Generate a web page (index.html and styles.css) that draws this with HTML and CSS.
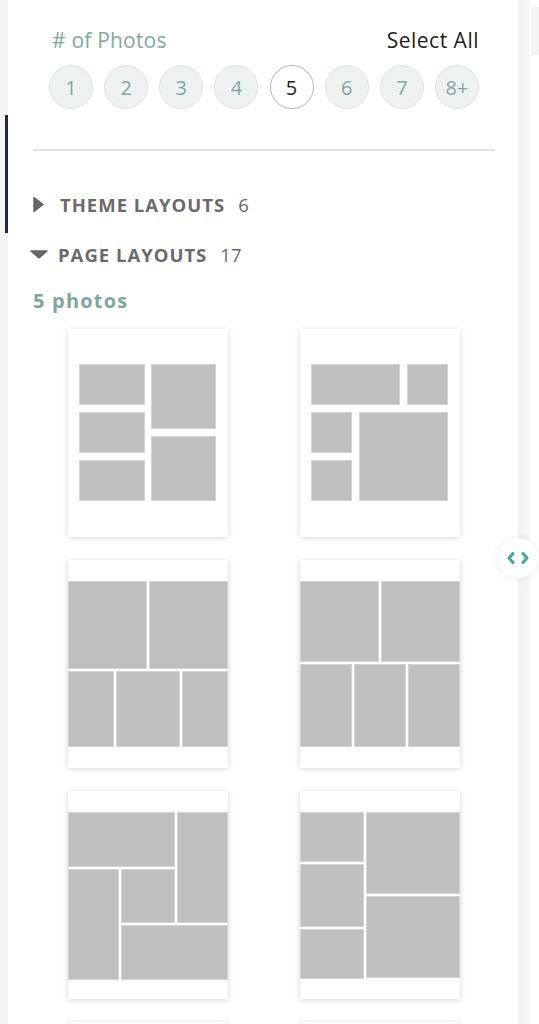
FILE: index.html
```html
<!DOCTYPE html>
<html lang="en">
<head>
  <meta charset="UTF-8">
  <title>Layouts</title>
  <meta name="viewport" content="width=device-width, initial-scale=1">
  <link rel="stylesheet" href="styles.css">
</head>

<body>

  <!-- Left rail -->
  <div class="rail">
    <div class="rail-mark"></div>
  </div>

  <!-- Layout panel -->
  <aside class="panel">

    <div class="filter">
      <div class="filter-head">
        <span class="filter-label"># of Photos</span>
        <a class="select-all" href="#">Select All</a>
      </div>
      <div class="counts">
        <button class="count">1</button>
        <button class="count">2</button>
        <button class="count">3</button>
        <button class="count">4</button>
        <button class="count active">5</button>
        <button class="count">6</button>
        <button class="count">7</button>
        <button class="count">8+</button>
      </div>
    </div>

    <hr class="divider">

    <div class="group">
      <svg class="caret-right" width="11" height="17" viewBox="0 0 11 17"><path d="M1 1.5 L10 8.5 L1 15.5 Z" fill="#666" stroke="#666" stroke-width="1.5" stroke-linejoin="round"/></svg>
      <span class="group-name">THEME LAYOUTS</span>
      <span class="group-count">6</span>
    </div>

    <div class="group">
      <svg class="caret-down" width="18" height="9" viewBox="0 0 18 9"><path d="M1 1 L17 1 L9 8 Z" fill="#666" stroke="#666" stroke-width="1.5" stroke-linejoin="round"/></svg>
      <span class="group-name">PAGE LAYOUTS</span>
      <span class="group-count">17</span>
    </div>

    <h4 class="sub">5 photos</h4>

    <div class="thumbs">

      <!-- 1 -->
      <div class="thumb">
        <div class="sheet sheet-a">
          <div class="col col-66">
            <div class="cell"></div><div class="cell"></div><div class="cell"></div>
          </div>
          <div class="col col-65">
            <div class="cell"></div><div class="cell"></div>
          </div>
        </div>
      </div>

      <!-- 2 -->
      <div class="thumb">
        <div class="sheet sheet-b">
          <div class="cell ga"></div><div class="cell gb"></div>
          <div class="cell gc"></div><div class="cell gd"></div>
          <div class="cell ge"></div>
        </div>
      </div>

      <!-- 3 -->
      <div class="thumb">
        <div class="sheet bleed">
          <div class="row row-88">
            <div class="cell"></div><div class="cell"></div>
          </div>
          <div class="row row-75">
            <div class="cell w46"></div><div class="cell"></div><div class="cell w46"></div>
          </div>
        </div>
      </div>

      <!-- 4 -->
      <div class="thumb">
        <div class="sheet bleed">
          <div class="row row-81">
            <div class="cell"></div><div class="cell"></div>
          </div>
          <div class="row row-82">
            <div class="cell"></div><div class="cell"></div><div class="cell"></div>
          </div>
        </div>
      </div>

      <!-- 5 -->
      <div class="thumb">
        <div class="sheet bleed sheet-e">
          <div class="cell ga"></div><div class="cell gb"></div>
          <div class="cell gc"></div><div class="cell gd"></div>
          <div class="cell ge"></div>
        </div>
      </div>

      <!-- 6 -->
      <div class="thumb">
        <div class="sheet bleed sheet-f">
          <div class="col col-64">
            <div class="cell h50"></div><div class="cell h63"></div><div class="cell h49"></div>
          </div>
          <div class="col col-fill">
            <div class="cell"></div><div class="cell"></div>
          </div>
        </div>
      </div>

      <div class="thumb"></div>
      <div class="thumb"></div>

    </div>

    <button class="toggle" aria-label="Toggle panel">
      <svg width="22" height="12" viewBox="0 0 22 12"><path d="M6 1.5 L2 6 L6 10.5 M16 1.5 L20 6 L16 10.5" fill="none" stroke="#3da7a1" stroke-width="3" stroke-linecap="round" stroke-linejoin="round"/></svg>
    </button>
  </aside>

  <div class="gutter"></div>

  <!-- Canvas side -->
  <main class="canvas">
    <div class="canvas-tab"></div>
  </main>

</body>
</html>
```

FILE: styles.css
```css
html, body { height: 100%; }
body {
  margin: 0;
  display: flex;
  overflow: hidden;
  font-family: 'Open Sans', 'Lato', sans-serif;
  background-color: #fff;
  color: #222;
}
.rail {
  width: 8px;
  flex: none;
  background-color: #f4f5f5;
  padding-top: 115px;
}
.rail-mark {
  width: 3px;
  height: 118px;
  margin-left: 5px;
  background-color: #1f2640;
}
.panel {
  position: relative;
  width: 510px;
  flex: none;
  padding: 0 23px 0 25px;
  box-sizing: border-box;
  background-color: #fff;
}
.gutter {
  width: 12px;
  flex: none;
  background: linear-gradient(to right, #f2f2f2, #f7f7f7);
}
.canvas {
  flex: 1;
  padding-top: 7px;
}
.canvas-tab {
  height: 48px;
  margin-left: 1px;
  background-color: #f4f4f4;
}

/* # of photos filter */
.filter {
  padding: 27px 16px 0 19px;
}
.filter-head {
  display: flex;
  justify-content: space-between;
  font-size: 21px;
  line-height: 26px;
  letter-spacing: 0.2px;
}
.filter-label {
  color: #80a8a1;
}
.select-all {
  color: #1d1d1d;
  text-decoration: none;
  letter-spacing: 0.5px;
}
.counts {
  display: flex;
  justify-content: space-between;
  margin: 12px 0 0 -3px;
}
.count {
  width: 44px;
  height: 44px;
  border-radius: 50%;
  border: 1px solid #dce3e2;
  background-color: #eef1f1;
  color: #82a7a0;
  font-family: inherit;
  font-size: 20px;
  padding: 0;
}
.count.active {
  background-color: #fff;
  border-color: #b5b5b5;
  color: #222;
}
.divider {
  border: 0;
  border-top: 2px solid #e2e2e2;
  margin: 40px 0 0;
}

/* groups */
.group {
  display: flex;
  align-items: center;
  height: 24px;
  margin-top: 41px;
  color: #6a6a6a;
  font-size: 18.5px;
}
.group + .group {
  margin-top: 26px;
}
.caret-right { margin-left: 0; margin-right: 16px; }
.caret-down { margin-left: -3px; margin-right: 10px; }
.group-name {
  font-weight: 700;
  letter-spacing: 1px;
}
.group-count {
  margin-left: 13px;
}
.sub {
  margin: 22px 0 0;
  color: #7ea69f;
  font-size: 20px;
  font-weight: 700;
  line-height: 26px;
  letter-spacing: 1.2px;
}

/* layout thumbnails */
.thumbs {
  display: grid;
  grid-template-columns: 160px 160px;
  justify-content: center;
  column-gap: 72px;
  row-gap: 23px;
  margin-top: 15px;
}
.thumb {
  height: 208px;
  background-color: #fff;
  box-shadow: 0 1px 6px rgba(0,0,0,0.16);
}
.sheet {
  height: 100%;
  box-sizing: border-box;
  padding: 35px 12px 36px 11px;
}
.sheet.bleed {
  padding: 21px 0;
}
.cell {
  background-color: #bfbfbf;
  box-shadow: inset 0 0 0 1px #d4d4d4;
  flex: 1;
}
.col, .row { display: flex; }
.col { flex-direction: column; }

.sheet-a { display: flex; gap: 6px; }
.sheet-a .col { gap: 7px; }
.col-66 { width: 66px; }
.col-65 { width: 65px; }

.sheet-b {
  display: grid;
  grid-template-columns: 41px 41px 41px;
  grid-template-rows: 41px 41px 41px;
  gap: 7px;
  grid-template-areas: "a a b" "c d d" "e d d";
}
.ga { grid-area: a; }
.gb { grid-area: b; }
.gc { grid-area: c; }
.gd { grid-area: d; }
.ge { grid-area: e; }

.bleed { display: flex; flex-direction: column; gap: 2px; }
.bleed .row { gap: 2px; }
.row-88 { height: 88px; }
.row-75 { height: 76px; }
.row-81 { height: 81px; }
.row-82 { height: 83px; }
.w46 { flex: none; width: 46px; }

.sheet-e {
  display: grid;
  grid-template-columns: 51px 54px 51px;
  grid-template-rows: 55px 54px 55px;
  gap: 2px;
  grid-template-areas: "a a b" "c d b" "c e e";
}
.sheet-f { flex-direction: row; }
.sheet-f .col { gap: 2px; }
.col-64 { width: 64px; }
.col-fill { flex: 1; }
.h50 { flex: none; height: 50px; }
.h63 { flex: none; height: 63px; }
.h49 { flex: none; height: 50px; }

/* collapse toggle */
.toggle {
  position: absolute;
  top: 538px;
  right: -20px;
  width: 40px;
  height: 40px;
  border-radius: 50%;
  border: 0;
  padding: 0;
  background-color: #fff;
  box-shadow: 0 0 8px rgba(0,0,0,0.08);
  display: flex;
  align-items: center;
  justify-content: center;
  z-index: 2;
}
```
